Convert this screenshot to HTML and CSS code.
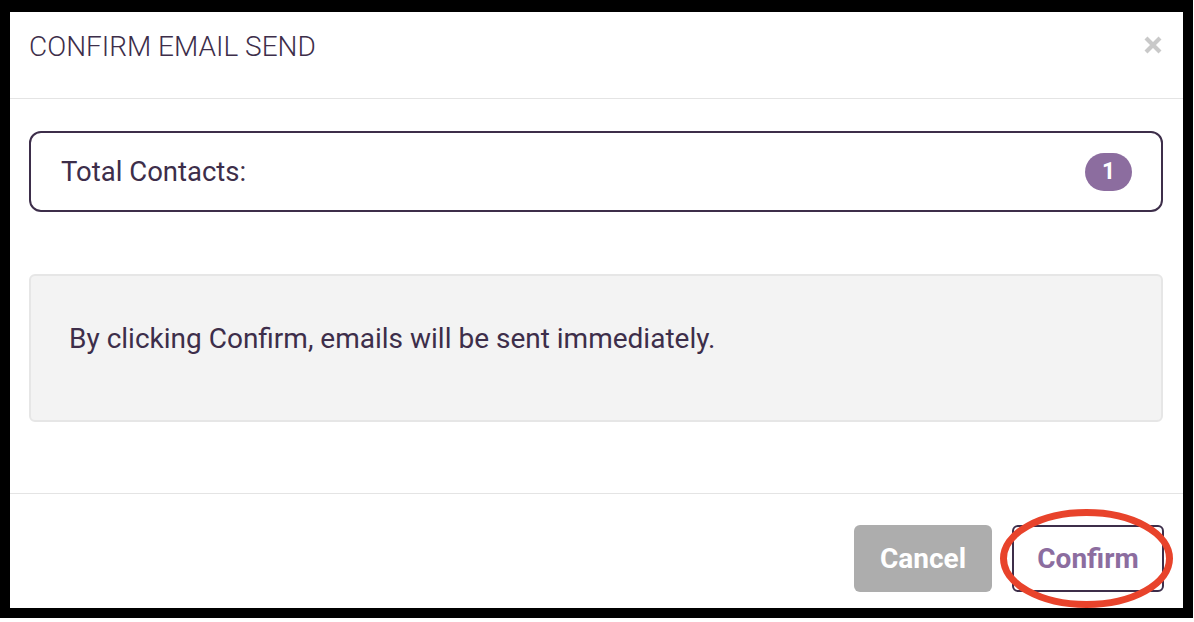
FILE: index.html
```html
<!DOCTYPE html>
<html lang="en">
<head>
<meta charset="utf-8">
<title>Confirm Email Send</title>
<link rel="stylesheet" href="styles.css">
</head>
<body>
<div class="frame">
  <div class="modal">
    <header class="modal-header">
      <h1 class="modal-title">CONFIRM EMAIL SEND</h1>
      <button class="close-btn" aria-label="Close">
        <svg viewBox="0 0 20 20" width="20" height="20"><path d="M3 3 L17 17 M17 3 L3 17" stroke="#c9c9c9" stroke-width="4.2" stroke-linecap="butt"/></svg>
      </button>
    </header>
    <div class="modal-body">
      <div class="count-row">
        <span class="count-label">Total Contacts:</span>
        <span class="badge">1</span>
      </div>
      <div class="notice">By clicking Confirm, emails will be sent immediately.</div>
    </div>
    <footer class="modal-footer">
      <button class="btn btn-cancel">Cancel</button>
      <div class="confirm-wrap">
        <button class="btn btn-confirm">Confirm</button>
        <svg class="highlight" viewBox="0 0 173 99" width="173" height="99"><ellipse cx="86.5" cy="49.5" rx="83" ry="46" fill="none" stroke="#e8432b" stroke-width="7"/></svg>
      </div>
    </footer>
  </div>
</div>
</body>
</html>
```
FILE: styles.css
```css
* { box-sizing: border-box; }
html, body { margin: 0; padding: 0; background: #ffffff; }
body { font-family: Roboto, "Liberation Sans", sans-serif; color: #3d2e4a; }

.frame {
  width: 1193px;
  height: 618px;
  border-style: solid;
  border-color: #000;
  border-width: 12px 10px 10px 10px;
}

.modal {
  height: 100%;
  display: flex;
  flex-direction: column;
  background: #fff;
}

.modal-header {
  height: 87px;
  flex: none;
  display: flex;
  justify-content: space-between;
  align-items: flex-start;
  padding: 19px 20px 0 19px;
  border-bottom: 1px solid #e4e4e4;
}

.modal-title {
  margin: 0;
  font-size: 28px;
  line-height: 32px;
  font-weight: 300;
  color: #3d2e4a;
  letter-spacing: 0;
}

.close-btn {
  border: 0;
  background: none;
  padding: 0;
  margin-top: 4px;
  width: 20px;
  height: 20px;
  display: block;
}
.close-btn svg { display: block; }

.modal-body {
  flex: 1;
  padding: 32px 20px 0 19px;
}

.count-row {
  height: 81px;
  border: 2px solid #3d2e4a;
  border-radius: 12px;
  display: flex;
  align-items: center;
  justify-content: space-between;
  padding: 0 29px 0 30px;
}

.count-label {
  font-size: 27.5px;
  color: #3d2e4a;
}

.badge {
  width: 47px;
  height: 38px;
  border-radius: 19px;
  background: #8c6d9f;
  color: #fff;
  font-weight: 700;
  font-size: 23px;
  display: flex;
  align-items: center;
  justify-content: center;
}

.notice {
  margin-top: 62px;
  height: 148px;
  background: #f3f3f3;
  border: 2px solid #e6e6e6;
  border-radius: 6px;
  padding: 47px 37px 0 38px;
  font-size: 28px;
  line-height: 32px;
  color: #3d2e4a;
}

.modal-footer {
  height: 115px;
  flex: none;
  border-top: 1px solid #e4e4e4;
  display: flex;
  justify-content: flex-end;
  align-items: flex-start;
  gap: 20px;
  padding: 31px 19px 0 0;
}

.btn {
  height: 67px;
  border-radius: 6px;
  font-family: Roboto, "Liberation Sans", sans-serif;
  font-weight: 700;
  font-size: 28px;
  padding: 0;
  cursor: pointer;
}

.btn-cancel {
  width: 138px;
  background: #adadad;
  border: 0;
  color: #fff;
}

.confirm-wrap {
  position: relative;
}

.btn-confirm {
  width: 152px;
  background: #fff;
  border: 2px solid #3d2e4a;
  color: #8c6d9f;
  display: block;
}

.highlight {
  position: absolute;
  left: -12px;
  top: -16px;
  pointer-events: none;
  overflow: visible;
}
```
